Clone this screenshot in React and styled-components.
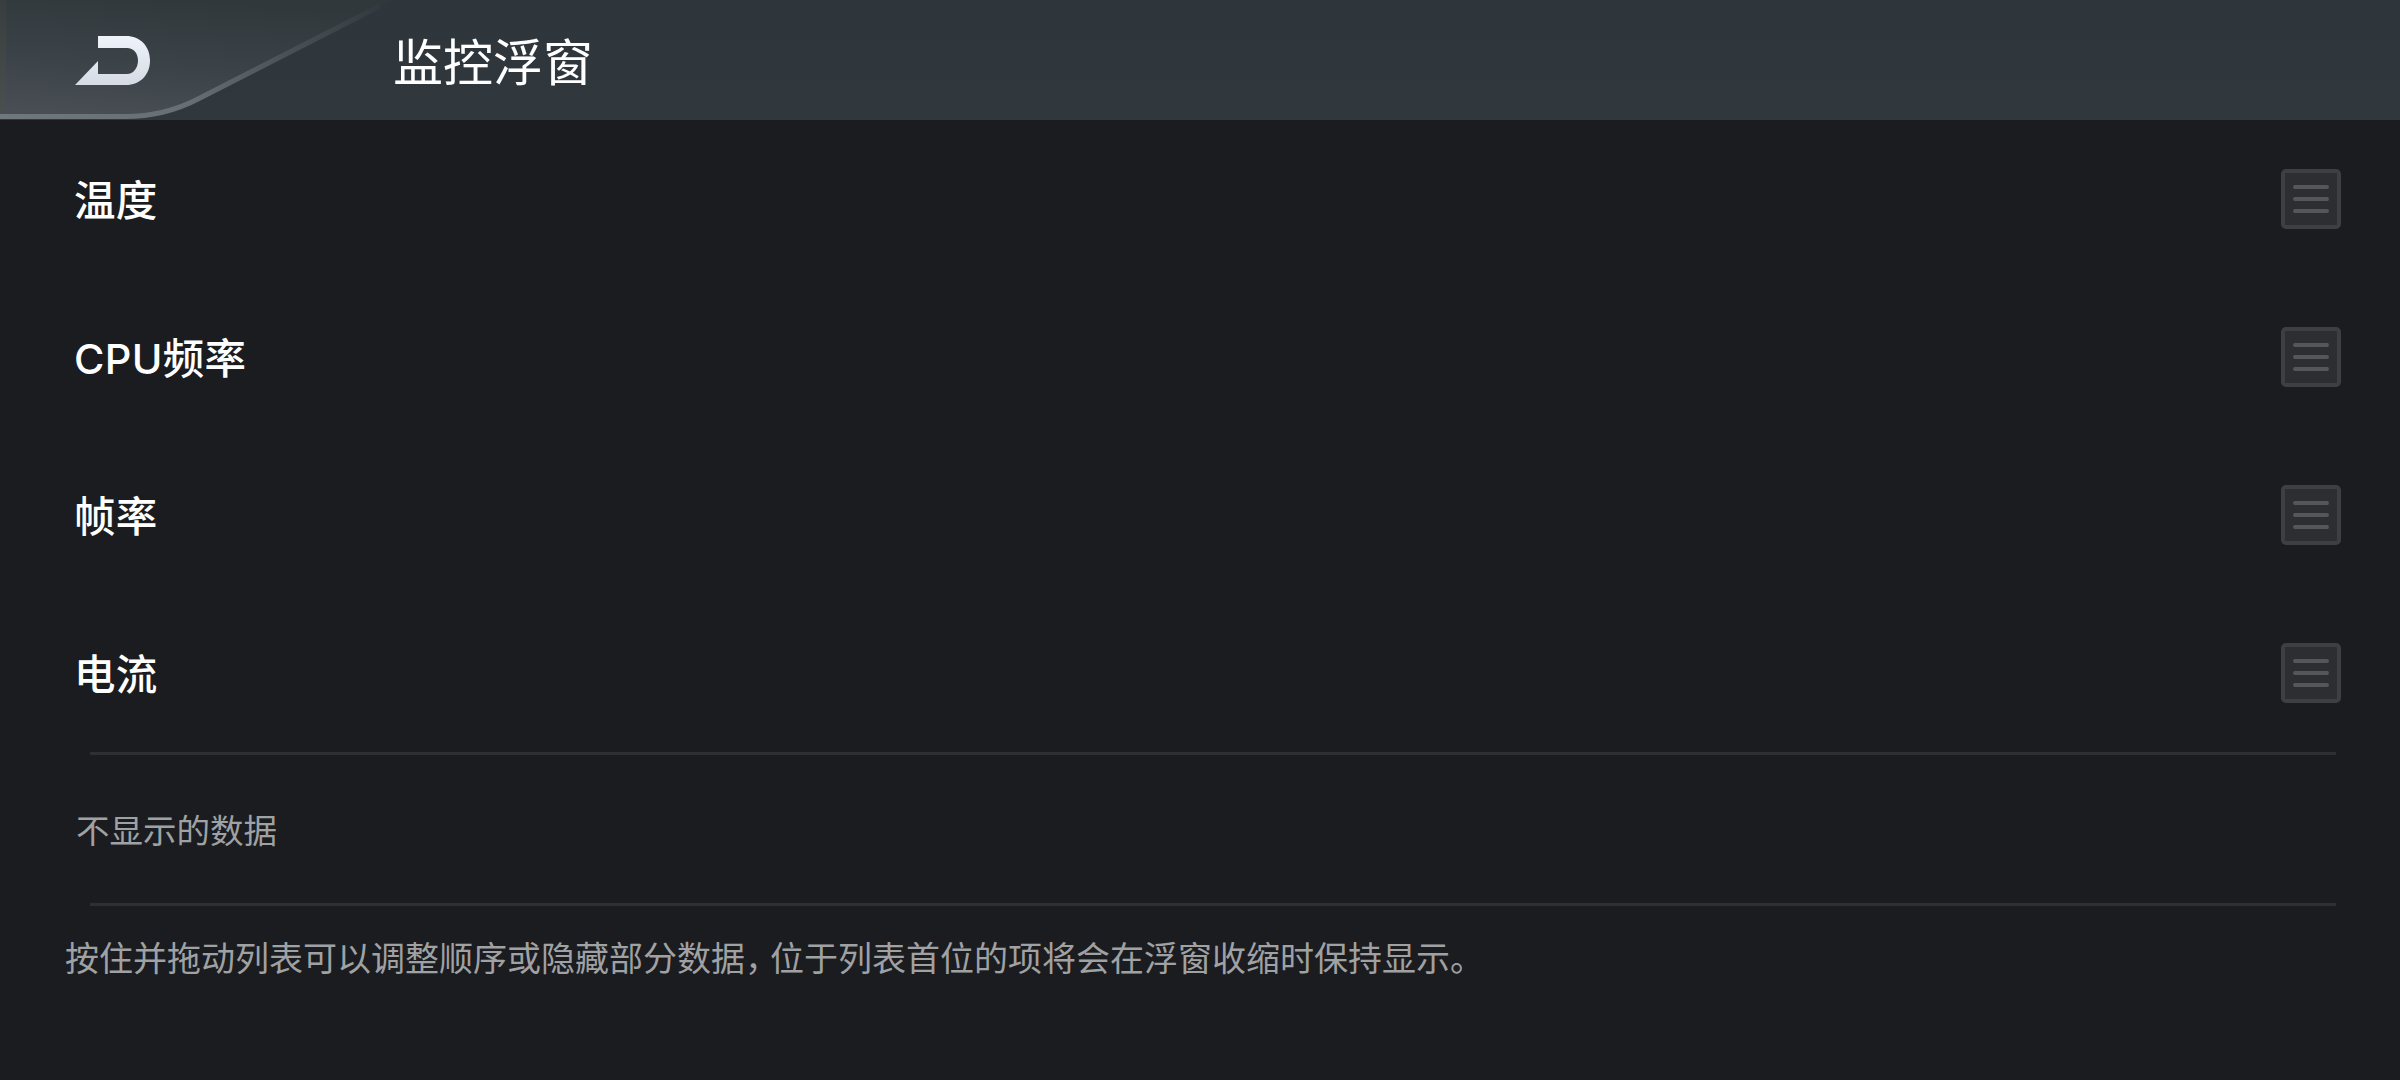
import React from 'react'
import styled, { createGlobalStyle } from 'styled-components'

const rows = ['温度', 'CPU频率', '帧率', '电流']

const Global = createGlobalStyle`
  html, body {
    margin: 0;
    padding: 0;
    background: #1a1c20;
  }
  * {
    box-sizing: border-box;
  }
`

const Page = styled.div`
  width: 2400px;
  height: 1080px;
  overflow: hidden;
  background: #1a1c20;
  font-family: "Noto Sans CJK SC", "Noto Sans", sans-serif;
`

const Header = styled.header`
  position: relative;
  height: 120px;
  display: flex;
  align-items: center;
  background: linear-gradient(180deg, #2f363b 0%, #30373d 100%);
`

const Plate = styled.svg`
  position: absolute;
  left: 0;
  top: 0;
`

const Logo = styled.svg`
  position: relative;
  margin-left: 75px;
  flex: none;
`

const Title = styled.h1`
  position: relative;
  margin: 0 0 3px 242px;
  font-size: 50px;
  font-weight: 400;
  line-height: 1;
  color: #fff;
`

const Row = styled.div`
  height: 158px;
  display: flex;
  align-items: center;
  justify-content: space-between;
  padding: 0 59px 0 74px;
`

const RowLabel = styled.span`
  padding-bottom: 3px;
  font-family: Inter, "Noto Sans CJK SC", sans-serif;
  font-size: 41.500px;
  font-weight: 500;
  letter-spacing: 0.300px;
  color: #fff;
`

const Handle = styled.div`
  width: 60px;
  height: 60px;
  display: flex;
  flex-direction: column;
  align-items: center;
  justify-content: center;
  gap: 8px;
  background: #2d2e31;
  border: 4px solid #3e3f42;
  border-radius: 5px;
`

const HandleBar = styled.i`
  display: block;
  width: 36px;
  height: 4px;
  border-radius: 2px;
  background: #55565a;
`

const Divider = styled.div`
  height: 3px;
  margin: 0 64px 0 90px;
  background: #2e2f33;
`

const Hidden = styled.div`
  height: 148px;
  display: flex;
  align-items: center;
  padding: 0 0 2px 76px;
  font-size: 33.500px;
  color: #a0a1a3;
`

const Hint = styled.p`
  margin: 0;
  padding-left: 65px;
  font-size: 34px;
  line-height: 102px;
  color: #a0a1a3;
`

const Comma = styled.span`
  letter-spacing: -9px;
`

export default function App() {
  return (
    <Page>
      <Global />
      <Header>
        <Plate width="400" height="120" viewBox="0 0 400 120">
          <defs>
            <linearGradient id="plateFill" x1="0.5" y1="0" x2="0.25" y2="1">
              <stop offset="0" stopColor="#31383c" />
              <stop offset="0.55" stopColor="#3c4348" />
              <stop offset="1" stopColor="#484e53" />
            </linearGradient>
            <linearGradient id="plateEdge" x1="0" y1="0" x2="1" y2="0">
              <stop offset="0" stopColor="#6e787d" />
              <stop offset="0.5" stopColor="#676f74" />
              <stop offset="0.75" stopColor="#4b5257" />
              <stop offset="1" stopColor="#333a3f" />
            </linearGradient>
            <linearGradient id="plateStrip" x1="0" y1="0" x2="0" y2="1">
              <stop offset="0" stopColor="#383e3e" />
              <stop offset="1" stopColor="#4a4f50" />
            </linearGradient>
          </defs>
          <path d="M0 0H393L198 99C175 111 150 116.500 125 116.500H0Z" fill="url(#plateFill)" />
          <rect x="0" y="0" width="6" height="114" fill="url(#plateStrip)" />
          <path
            d="M0 116.500H125C150 116.500 175 111 198 99L380 6"
            fill="none"
            stroke="url(#plateEdge)"
            strokeWidth="5"
          />
        </Plate>
        <Logo width="76" height="50" viewBox="75 33 76 50">
          <defs>
            <linearGradient id="logoFill" x1="0" y1="0" x2="0" y2="1">
              <stop offset="0" stopColor="#eff3fb" />
              <stop offset="1" stopColor="#d5dae4" />
            </linearGradient>
          </defs>
          <path
            d="M98 34H126C140 34 150 44 150 58.500C150 73 140 83 126 83H75L98 59V72H127C133.500 72 138 66 138 58.500C138 51 133.500 46 127 46H98Z"
            fill="url(#logoFill)"
          />
        </Logo>
        <Title>监控浮窗</Title>
      </Header>
      {rows.map((r) => (
        <Row key={r}>
          <RowLabel>{r}</RowLabel>
          <Handle>
            <HandleBar />
            <HandleBar />
            <HandleBar />
          </Handle>
        </Row>
      ))}
      <Divider />
      <Hidden>不显示的数据</Hidden>
      <Divider />
      <Hint>
        按住并拖动列表可以调整顺序或隐藏部分数据<Comma>，</Comma>位于列表首位的项将会在浮窗收缩时保持显示。
      </Hint>
    </Page>
  )
}
